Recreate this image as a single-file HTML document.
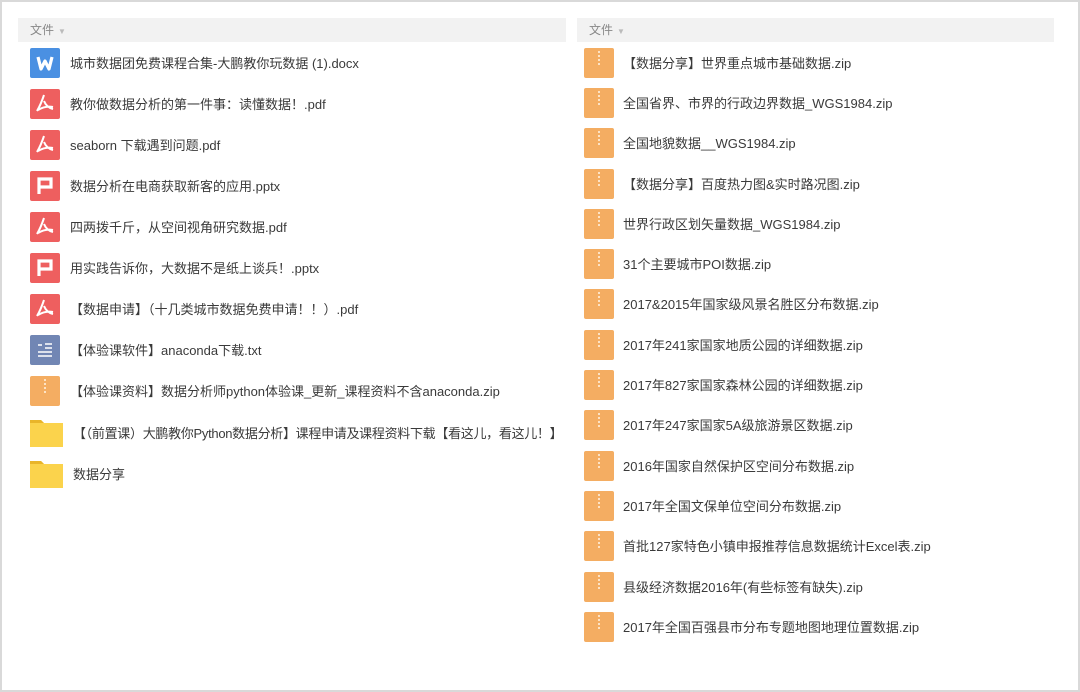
<!DOCTYPE html>
<html><head><meta charset="utf-8"><style>
body{margin:0;width:1080px;height:692px;background:#fff;position:relative;overflow:hidden;font-family:"Liberation Sans","Noto Sans CJK SC",sans-serif;}
.frame{position:absolute;left:0;top:0;width:1076px;height:688px;border:2px solid #d9d9d9;}
.hdr{position:absolute;top:18px;height:24px;background:#f2f2f2;font-size:12px;color:#888;line-height:24px;padding-left:12px;box-sizing:border-box;}
.hdr span{font-size:8px;color:#bbb;margin-left:4px;}
.row{position:absolute;height:30px;font-size:13px;color:#3a3a3a;line-height:31px;white-space:nowrap;}
.ic{position:absolute;left:0;top:0;width:30px;height:30px;border-radius:2px;}
.t{position:absolute;top:0;}
.zip{background:#f4ad62;}
.zip::after{content:"";position:absolute;left:14px;top:3px;width:2px;height:14px;background:repeating-linear-gradient(#fde3c5 0 2px,transparent 2px 4px);}
</style></head><body>
<div class="frame"></div>
<div class="hdr" style="left:18px;width:548px;">文件<span>▼</span></div>
<div class="hdr" style="left:577px;width:477px;">文件<span>▼</span></div>

<div class="row" style="left:30px;top:48px"><div class="ic" style="background:#4a90e2"><svg width="30" height="30"><path d="M8 9 L11 21 L15 13 L19 21 L22 9" stroke="#fff" stroke-width="3.2" fill="none" stroke-linejoin="round"/></svg></div><div class="t" style="left:40px">城市数据团免费课程合集-大鹏教你玩数据 (1).docx</div></div>
<div class="row" style="left:30px;top:89px"><div class="ic" style="background:#ee5f5f"><svg width="30" height="30"><path d="M14 6 C12 12 10 17 7 22 M14 12 C16 17 19 19 23 20 M8 21 C13 18 18 17 23 18" stroke="#fff" stroke-width="2" fill="none"/></svg></div><div class="t" style="left:40px">教你做数据分析的第一件事：读懂数据！.pdf</div></div>
<div class="row" style="left:30px;top:130px"><div class="ic" style="background:#ee5f5f"><svg width="30" height="30"><path d="M14 6 C12 12 10 17 7 22 M14 12 C16 17 19 19 23 20 M8 21 C13 18 18 17 23 18" stroke="#fff" stroke-width="2" fill="none"/></svg></div><div class="t" style="left:40px">seaborn 下载遇到问题.pdf</div></div>
<div class="row" style="left:30px;top:171px"><div class="ic" style="background:#ee5f5f"><svg width="30" height="30"><path d="M9 23 V8 H21 V16 H9" stroke="#fff" stroke-width="3.2" fill="none"/></svg></div><div class="t" style="left:40px">数据分析在电商获取新客的应用.pptx</div></div>
<div class="row" style="left:30px;top:212px"><div class="ic" style="background:#ee5f5f"><svg width="30" height="30"><path d="M14 6 C12 12 10 17 7 22 M14 12 C16 17 19 19 23 20 M8 21 C13 18 18 17 23 18" stroke="#fff" stroke-width="2" fill="none"/></svg></div><div class="t" style="left:40px">四两拨千斤，从空间视角研究数据.pdf</div></div>
<div class="row" style="left:30px;top:253px"><div class="ic" style="background:#ee5f5f"><svg width="30" height="30"><path d="M9 23 V8 H21 V16 H9" stroke="#fff" stroke-width="3.2" fill="none"/></svg></div><div class="t" style="left:40px">用实践告诉你，大数据不是纸上谈兵！.pptx</div></div>
<div class="row" style="left:30px;top:294px"><div class="ic" style="background:#ee5f5f"><svg width="30" height="30"><path d="M14 6 C12 12 10 17 7 22 M14 12 C16 17 19 19 23 20 M8 21 C13 18 18 17 23 18" stroke="#fff" stroke-width="2" fill="none"/></svg></div><div class="t" style="left:40px">【数据申请】（十几类城市数据免费申请！！）.pdf</div></div>
<div class="row" style="left:30px;top:335px"><div class="ic" style="background:#7186b4"><svg width="30" height="30"><path d="M8 10 H12 M15 9 H22 M15 13 H22 M8 17 H22 M8 21 H22" stroke="#fff" stroke-width="1.6"/></svg></div><div class="t" style="left:40px">【体验课软件】anaconda下载.txt</div></div>
<div class="row" style="left:30px;top:376px"><div class="ic zip"></div><div class="t" style="left:40px">【体验课资料】数据分析师python体验课_更新_课程资料不含anaconda.zip</div></div>
<div class="row" style="left:30px;top:418px"><svg width="34" height="30" style="position:absolute;left:0;top:0"><path d="M0 2 H11 L14 5 H33 V29 H0 Z" fill="#fbd34c"/><path d="M0 2 H11 L14 5 H0 Z" fill="#e9b52a"/></svg><div class="t" style="left:43px;letter-spacing:-0.3px">【（前置课）大鹏教你Python数据分析】课程申请及课程资料下载【看这儿，看这儿！】</div></div>
<div class="row" style="left:30px;top:459px"><svg width="34" height="30" style="position:absolute;left:0;top:0"><path d="M0 2 H11 L14 5 H33 V29 H0 Z" fill="#fbd34c"/><path d="M0 2 H11 L14 5 H0 Z" fill="#e9b52a"/></svg><div class="t" style="left:43px">数据分享</div></div>

<div class="row" style="left:584px;top:48px"><div class="ic zip"></div><div class="t" style="left:39px">【数据分享】世界重点城市基础数据.zip</div></div>
<div class="row" style="left:584px;top:88px"><div class="ic zip"></div><div class="t" style="left:39px">全国省界、市界的行政边界数据_WGS1984.zip</div></div>
<div class="row" style="left:584px;top:128px"><div class="ic zip"></div><div class="t" style="left:39px">全国地貌数据__WGS1984.zip</div></div>
<div class="row" style="left:584px;top:169px"><div class="ic zip"></div><div class="t" style="left:39px">【数据分享】百度热力图&amp;实时路况图.zip</div></div>
<div class="row" style="left:584px;top:209px"><div class="ic zip"></div><div class="t" style="left:39px">世界行政区划矢量数据_WGS1984.zip</div></div>
<div class="row" style="left:584px;top:249px"><div class="ic zip"></div><div class="t" style="left:39px">31个主要城市POI数据.zip</div></div>
<div class="row" style="left:584px;top:289px"><div class="ic zip"></div><div class="t" style="left:39px">2017&amp;2015年国家级风景名胜区分布数据.zip</div></div>
<div class="row" style="left:584px;top:330px"><div class="ic zip"></div><div class="t" style="left:39px">2017年241家国家地质公园的详细数据.zip</div></div>
<div class="row" style="left:584px;top:370px"><div class="ic zip"></div><div class="t" style="left:39px">2017年827家国家森林公园的详细数据.zip</div></div>
<div class="row" style="left:584px;top:410px"><div class="ic zip"></div><div class="t" style="left:39px">2017年247家国家5A级旅游景区数据.zip</div></div>
<div class="row" style="left:584px;top:451px"><div class="ic zip"></div><div class="t" style="left:39px">2016年国家自然保护区空间分布数据.zip</div></div>
<div class="row" style="left:584px;top:491px"><div class="ic zip"></div><div class="t" style="left:39px">2017年全国文保单位空间分布数据.zip</div></div>
<div class="row" style="left:584px;top:531px"><div class="ic zip"></div><div class="t" style="left:39px">首批127家特色小镇申报推荐信息数据统计Excel表.zip</div></div>
<div class="row" style="left:584px;top:572px"><div class="ic zip"></div><div class="t" style="left:39px">县级经济数据2016年(有些标签有缺失).zip</div></div>
<div class="row" style="left:584px;top:612px"><div class="ic zip"></div><div class="t" style="left:39px">2017年全国百强县市分布专题地图地理位置数据.zip</div></div>
</body></html>
